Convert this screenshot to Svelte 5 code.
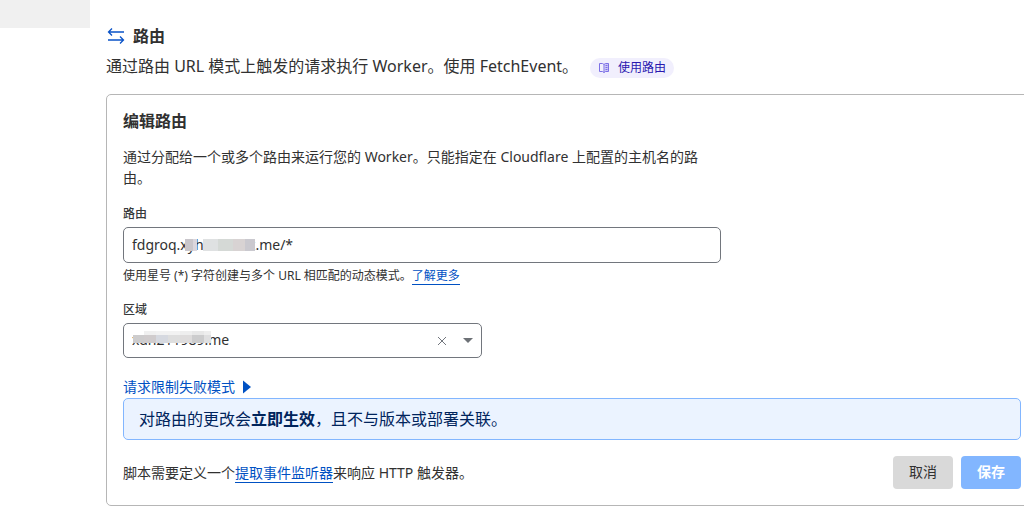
<script>
  let route = $state('fdgroq.xyhxxxxxxx.me/*');
  let zone = $state('xdn211989.me');
  const routeMask = [
    ['#c9c6cb', 8], ['#dad6dd', 4], ['transparent', 6], ['#dfe1e2', 15],
    ['#d5d9d6', 15], ['#d8d3d3', 12], ['#cac9cf', 10]
  ];
  const zoneMask = [
    ['#fff', '#cdcccd', 11], ['#f0f0f0', '#d0cccd', 12], ['#f2f2f2', '#d6d9e0', 12],
    ['#f2f2f2', '#dedede', 12], ['#eeeeee', '#dedcdc', 12], ['#e8e8e8', '#cccccd', 12],
    ['#eeeeee', '#dfdfe0', 7]
  ];
</script>

<div class="page">
  <aside class="rail"><div class="rail-item"></div></aside>
  <main>
    <header>
      <h1>
        <svg width="18" height="18" viewBox="0 0 18 18" fill="none" stroke="#0a53c8" stroke-width="1.3" aria-hidden="true">
          <path d="M17 5H1.5M5 1.5L1.5 5L5 8.5M1 13H16.5M13 9.5L16.5 13L13 16.5" />
        </svg>
        路由
      </h1>
      <div class="intro">
        <p>通过路由 URL 模式上触发的请求执行 Worker。使用 FetchEvent。</p>
        <a class="pill" href="#docs">
          <svg width="12" height="12" viewBox="0 0 12 12" fill="none" stroke="#7c70e6" aria-hidden="true">
            <path d="M6.5 1.5H11V9.5H6.5Z" fill="#cdc7f6" stroke="none" />
            <path d="M1.5 1.5H4.5L6 2.5L7.5 1.5H10.5V9.5H7.5L6 10.5L4.5 9.5H1.5ZM6 2.5V10.5" />
            <path d="M7.5 3.5H9.5M7.5 5.5H9.5M7.5 7.5H9.5" />
          </svg>
          使用路由
        </a>
      </div>
    </header>

    <form class="card" onsubmit={(e) => e.preventDefault()}>
      <h2>编辑路由</h2>
      <p class="desc">通过分配给一个或多个路由来运行您的 Worker。只能指定在 Cloudflare 上配置的主机名的路由。</p>

      <label for="route">路由</label>
      <div class="field">
        <input id="route" type="text" bind:value={route} />
        <span class="mask route-mask" aria-hidden="true">
          {#each routeMask as [color, width]}
            <i style:background={color} style:width="{width}px"></i>
          {/each}
        </span>
      </div>
      <p class="help">使用星号 (*) 字符创建与多个 URL 相匹配的动态模式。<a href="#more">了解更多</a></p>

      <label for="zone">区域</label>
      <div class="field zone">
        <select id="zone" bind:value={zone}>
          <option value="">&nbsp;</option>
          <option value="xdn211989.me">xdn211989.me</option>
        </select>
        <span class="mask zone-mask" aria-hidden="true">
          {#each zoneMask as [top, color, width]}
            <i style:background={color} style:border-color={top} style:width="{width}px"></i>
          {/each}
        </span>
        <button type="button" class="clear" aria-label="清除" onclick={() => (zone = '')}>
          <svg width="10" height="10" viewBox="0 0 10 10" stroke="#72767d" fill="none"><path d="M1 1L9 9M9 1L1 9" /></svg>
        </button>
        <svg class="caret" width="10" height="5" viewBox="0 0 10 5" aria-hidden="true"><path d="M0 0H10L5 5Z" fill="#6d7176" /></svg>
      </div>

      <button type="button" class="toggle">
        请求限制失败模式
        <svg width="8" height="14" viewBox="0 0 8 14" aria-hidden="true"><path d="M0 0.5L8 7L0 13.5Z" fill="#0051c3" /></svg>
      </button>

      <div class="notice">对路由的更改会<strong>立即生效</strong>，且不与版本或部署关联。</div>

      <footer>
        <p>脚本需要定义一个<a href="#listener">提取事件监听器</a>来响应 HTTP 触发器。</p>
        <div class="actions">
          <button type="button" class="btn cancel">取消</button>
          <button type="submit" class="btn save">保存</button>
        </div>
      </footer>
    </form>
  </main>
</div>

<style>
  :global(body) {
    margin: 0;
    background: #fff;
  }
  .page {
    display: flex;
    overflow: hidden;
    font-family: 'Noto Sans', 'Noto Sans CJK SC', sans-serif;
    font-size: 14px;
    line-height: 21px;
    color: #313131;
  }
  h1, h2, p {
    margin: 0;
  }
  .rail {
    flex: 0 0 90px;
  }
  .rail-item {
    height: 28px;
    background: #f0f0f0;
  }
  main {
    flex: 1;
    min-width: 0;
    padding: 24px 0 20px 16px;
    margin-right: -14px;
  }
  h1 {
    display: flex;
    align-items: center;
    gap: 8px;
    padding-left: 1px;
    font-size: 16px;
    line-height: 24px;
    font-weight: 600;
  }
  .intro {
    display: flex;
    align-items: flex-end;
    gap: 12px;
    margin-top: 6px;
    font-size: 16px;
    line-height: 24px;
  }
  .pill {
    display: flex;
    align-items: center;
    gap: 8px;
    padding: 0 8px;
    border-radius: 10px;
    background: #f1effd;
    color: #2a18b0;
    font-size: 12px;
    line-height: 20px;
    text-decoration: none;
    white-space: nowrap;
  }
  .card {
    margin-top: 16px;
    padding: 16px;
    border: 1px solid #b6b6b6;
    border-radius: 5px;
  }
  h2 {
    font-size: 16px;
    line-height: 20px;
    font-weight: 600;
  }
  .desc {
    max-width: 598px;
    margin-top: 15px;
  }
  label {
    display: block;
    margin-top: 18px;
    padding-bottom: 5px;
    font-size: 12px;
    line-height: 16px;
    font-weight: 500;
    color: #36393a;
  }
  .field {
    position: relative;
    max-width: 598px;
  }
  .zone {
    max-width: 359px;
  }
  input, select {
    display: block;
    box-sizing: border-box;
    width: 100%;
    height: 36px;
    padding: 0 8px 2px;
    border: 1px solid #72767d;
    border-radius: 5px;
    background: #fff;
    color: #313131;
    font: inherit;
    appearance: none;
  }
  select {
    height: 35px;
  }
  .mask {
    position: absolute;
    display: flex;
    pointer-events: none;
  }
  .mask i {
    height: 12px;
  }
  .route-mask {
    left: 62px;
    top: 12px;
  }
  .zone-mask {
    left: 10px;
    top: 8px;
  }
  .zone-mask i {
    height: 8px;
    border-top: 4px solid;
  }
  .clear {
    position: absolute;
    right: 31px;
    top: 9px;
    display: grid;
    place-items: center;
    width: 18px;
    height: 18px;
    padding: 0;
    border: 0;
    background: none;
  }
  .caret {
    position: absolute;
    right: 9px;
    top: 15px;
    pointer-events: none;
  }
  .help {
    margin-top: 4px;
    font-size: 12px;
    line-height: 17px;
  }
  a {
    color: #0051c3;
    text-decoration: none;
  }
  .help a, footer a {
    border-bottom: 1px solid #0051c3;
  }
  .toggle {
    display: flex;
    align-items: center;
    gap: 8px;
    margin-top: 18px;
    padding: 0;
    border: 0;
    background: none;
    color: #0051c3;
    font: inherit;
    line-height: 22px;
  }
  .notice {
    padding: 8px 15px;
    border: 1px solid #82b6ff;
    border-radius: 5px;
    background: #ebf3ff;
    color: #00245c;
    font-size: 16px;
    line-height: 24px;
  }
  .notice strong {
    font-weight: 700;
  }
  footer {
    display: flex;
    align-items: center;
    justify-content: space-between;
    gap: 16px;
    margin-top: 16px;
  }
  .actions {
    display: flex;
    gap: 8px;
  }
  .btn {
    height: 33px;
    padding: 0 16px 2px;
    border: 0;
    border-radius: 4px;
    font: inherit;
  }
  .cancel {
    background: #d9d9d9;
    color: #313131;
  }
  .save {
    background: #82b6ff;
    color: #fff;
    font-weight: 600;
  }
</style>
